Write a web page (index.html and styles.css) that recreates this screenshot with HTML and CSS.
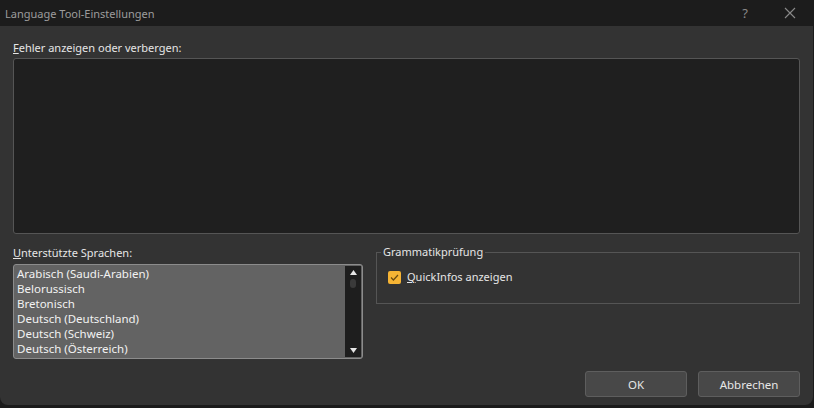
FILE: index.html
```html
<!DOCTYPE html>
<html lang="de">
<head>
<meta charset="utf-8">
<title>Language Tool-Einstellungen</title>
<link rel="stylesheet" href="styles.css">
</head>
<body>
<div class="window">
  <div class="titlebar">
    <span class="title">Language Tool-Einstellungen</span>
    <span class="spacer"></span>
    <span class="tb-btn help">?</span>
    <span class="tb-btn close">
      <svg width="12" height="12" viewBox="0 0 12 12"><path d="M1 1 L11 11 M11 1 L1 11" stroke="#8a8a8a" stroke-width="1.1" fill="none"/></svg>
    </span>
  </div>
  <div class="content">
    <div class="label first"><u>F</u>ehler anzeigen oder verbergen:</div>
    <div class="errorbox"></div>
    <div class="row">
      <div class="leftcol">
        <div class="label"><u>U</u>nterstützte Sprachen:</div>
        <div class="listbox">
          <ul class="items">
            <li>Arabisch (Saudi-Arabien)</li>
            <li>Belorussisch</li>
            <li>Bretonisch</li>
            <li>Deutsch (Deutschland)</li>
            <li>Deutsch (Schweiz)</li>
            <li>Deutsch (Österreich)</li>
          </ul>
          <div class="scrollbar">
            <svg class="arrow" width="7" height="5" viewBox="0 0 7 5"><path d="M0 5 L3.5 0 L7 5 Z" fill="#e6e6e6"/></svg>
            <div class="thumb"></div>
            <span class="grow"></span>
            <svg class="arrow" width="7" height="5" viewBox="0 0 7 5"><path d="M0 0 L3.5 5 L7 0 Z" fill="#e6e6e6"/></svg>
          </div>
        </div>
      </div>
      <fieldset class="group">
        <legend>Grammatikprüfung</legend>
        <label class="check">
          <span class="box">
            <svg width="9" height="7" viewBox="0 0 9 7"><path d="M1 3.5 L3.4 6 L8 1" stroke="#6b4a10" stroke-width="1.2" fill="none"/></svg>
          </span>
          <span><u>Q</u>uickInfos anzeigen</span>
        </label>
      </fieldset>
    </div>
    <div class="buttons">
      <button class="btn">OK</button>
      <button class="btn">Abbrechen</button>
    </div>
  </div>
</div>
</body>
</html>
```
FILE: styles.css
```css
html, body {
  margin: 0;
  padding: 0;
  background: #1b1b1b;
}
body {
  width: 814px;
  height: 408px;
  overflow: hidden;
  font-family: "Noto Sans", "Open Sans", sans-serif;
  font-size: 11px;
  color: #e6e6e6;
}
.window {
  width: 813px;
  height: 405px;
  background: #333333;
  border-radius: 0 0 8px 8px;
  display: flex;
  flex-direction: column;
  overflow: hidden;
}
.titlebar {
  height: 26px;
  background: #1c1c1c;
  display: flex;
  align-items: center;
  padding-left: 5px;
  flex-shrink: 0;
}
.title {
  color: #9c9c9c;
  font-size: 11px;
}
.spacer { flex: 1; }
.tb-btn {
  display: flex;
  align-items: center;
  justify-content: center;
  color: #8a8a8a;
  height: 26px;
}
.help {
  width: 16px;
  font-size: 13px;
  margin-right: 29px;
}
.close {
  width: 16px;
  margin-right: 15px;
}
.content {
  padding: 0 13px 0 13px;
  display: flex;
  flex-direction: column;
}
.label {
  line-height: 16px;
  color: #e6e6e6;
}
.label.first {
  margin-top: 14px;
  margin-bottom: 2px;
}
.errorbox {
  height: 174px;
  background: #1f1f1f;
  border: 1px solid #555555;
  border-radius: 3px;
}
.row {
  display: flex;
  gap: 13px;
  margin-top: 11px;
}
.leftcol {
  width: 350px;
  display: flex;
  flex-direction: column;
}
.leftcol .label {
  margin-bottom: 3px;
}
.listbox {
  height: 91px;
  background: #636363;
  border: 1px solid #8c8c8c;
  border-radius: 3px;
  display: flex;
  padding: 1px;
}
.items {
  list-style: none;
  margin: 0;
  padding: 0 0 0 2px;
  flex: 1;
  overflow: hidden;
  font-size: 11.5px;
}
.items li {
  line-height: 15px;
  height: 15px;
  color: #f2f2f2;
}
.scrollbar {
  width: 16px;
  background: #1e1e1e;
  display: flex;
  flex-direction: column;
  align-items: center;
  padding: 4px 0 4px;
}
.thumb {
  width: 6px;
  height: 9px;
  background: #3a3a3a;
  border-radius: 3px;
  margin-top: 4px;
}
.grow { flex: 1; }
.group {
  flex: 1;
  margin: 0;
  padding: 10px 12px 0 11px;
  border: 1px solid #555555;
  border-radius: 0;
  height: 59px;
  box-sizing: border-box;
  min-width: 0;
}
.group legend {
  padding: 0 2px;
  margin-left: -7px;
  color: #e6e6e6;
  line-height: 14px;
}
.check {
  display: flex;
  align-items: center;
  gap: 6px;
  color: #e6e6e6;
  line-height: 16px;
}
.box {
  width: 13px;
  height: 13px;
  background: #f6b434;
  border-radius: 2px;
  display: flex;
  align-items: center;
  justify-content: center;
}
.buttons {
  display: flex;
  justify-content: flex-end;
  gap: 11px;
  margin-top: 12px;
}
.btn {
  width: 102px;
  height: 26px;
  background: #484848;
  border: 1px solid #5e5e5e;
  border-radius: 3px;
  color: #e6e6e6;
  font-family: "Noto Sans", "Open Sans", sans-serif;
  font-size: 11.5px;
  padding: 0;
}
```
